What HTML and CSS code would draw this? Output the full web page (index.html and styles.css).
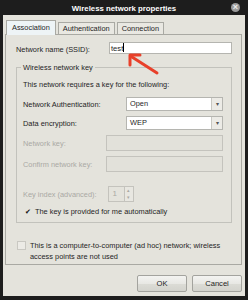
FILE: index.html
```html
<!DOCTYPE html>
<html lang="en">
<head>
    <meta charset="UTF-8">
    <title>Wireless network properties</title>
    <link rel="stylesheet" href="styles.css">
</head>
<body>
    <div class="window">
        <div class="titlebar">
            <span></span>
            <span class="title">Wireless network properties</span>
            <span class="close">&#215;</span>
        </div>

        <div class="client">
            <div class="tabs">
                <div class="tab active">Association</div>
                <div class="tab">Authentication</div>
                <div class="tab">Connection</div>
            </div>

            <div class="panel">
                <div class="row ssid-row">
                    <label>Network name (SSID):</label>
                    <div class="field ssid">test<span class="caret"></span>
                        <svg class="arrow" width="34" height="24" viewBox="0 0 34 24">
                            <path d="M31 21 L6 5" stroke="#e8402a" stroke-width="3" stroke-linecap="round" fill="none"/>
                            <path d="M4 13 L4 3 L14 3" stroke="#e8402a" stroke-width="3" stroke-linecap="round" stroke-linejoin="round" fill="none"/>
                        </svg>
                    </div>
                </div>

                <fieldset class="group">
                    <legend>Wireless network key</legend>
                    <p class="note">This network requires a key for the following:</p>

                    <div class="row">
                        <label>Network Authentication:</label>
                        <div class="select">Open<span class="drop">&#9662;</span></div>
                    </div>
                    <div class="row">
                        <label>Data encryption:</label>
                        <div class="select">WEP<span class="drop">&#9662;</span></div>
                    </div>

                    <div class="row off key-row">
                        <label>Network key:</label>
                        <div class="field disabled wide"></div>
                    </div>
                    <div class="row off key-row">
                        <label>Confirm network key:</label>
                        <div class="field disabled wide"></div>
                    </div>

                    <div class="row off index-row">
                        <label>Key index (advanced):</label>
                        <div class="spin">
                            <span class="spin-val">1</span>
                            <span class="spin-btns"><i>&#9652;</i><i>&#9662;</i></span>
                        </div>
                    </div>

                    <div class="check-row">
                        <span class="box checked">&#10004;</span>
                        <span>The key is provided for me automatically</span>
                    </div>
                </fieldset>

                <div class="check-row adhoc">
                    <span class="box"></span>
                    <span>This is a computer-to-computer (ad hoc) network; wireless access points are not used</span>
                </div>
            </div>

            <div class="buttons">
                <button class="btn">OK</button>
                <button class="btn">Cancel</button>
            </div>
        </div>
    </div>
</body>
</html>
```

FILE: styles.css
```css
body {
    margin: 0;
    font-family: 'Liberation Sans', Arial, sans-serif;
    font-size: 7.4px;
    color: #1e1e1e;
    background: #1b1b1b;
}

.window {
    width: 248px;
    height: 300px;
    box-sizing: border-box;
    padding: 0 3px 4px 3px;
    background: #1d1d1d;
    display: flex;
    flex-direction: column;
}

.titlebar {
    height: 15px;
    display: grid;
    grid-template-columns: 1fr auto 1fr;
    align-items: center;
    color: #fff;
}

.title {
    font-weight: bold;
    font-size: 7.8px;
    padding-top: 1px;
}

.close {
    justify-self: end;
    width: 9px;
    height: 9px;
    margin-right: 5px;
    border-radius: 50%;
    background: #9a9a9a;
    color: #eee;
    font-size: 9px;
    line-height: 9px;
    text-align: center;
    font-weight: bold;
}

.client {
    flex: 1;
    background: #e4e3dc;
    padding: 5px 3px 3px 2px;
    display: flex;
    flex-direction: column;
}

.tabs {
    display: flex;
    gap: 2px;
    padding-left: 1px;
    height: 14px;
    position: relative;
    z-index: 1;
}

.tab {
    border: 1px solid #a9a9a3;
    border-bottom: none;
    background: #e9e8e2;
    padding: 0 4px;
    margin-top: 2px;
    line-height: 12px;
}

.tab.active {
    background: #eef4f6;
    margin-top: 0;
    line-height: 14px;
    padding: 0 5px 0 5px;
    margin-bottom: -1px;
}

.panel {
    border: 1px solid #a9a9a3;
    height: 231px;
    box-sizing: border-box;
    padding: 7px 9px 0 10px;
}

.row {
    display: flex;
    align-items: center;
    justify-content: space-between;
}

.ssid-row label {
    padding-top: 2px;
}

.field {
    background: #fff;
    border: 1px solid #b5b5b0;
    height: 12px;
    box-sizing: border-box;
}

.ssid {
    width: 123px;
    position: relative;
    line-height: 11px;
    padding-left: 1px;
    font-size: 7.6px;
}

.caret {
    display: inline-block;
    width: 1px;
    height: 9px;
    background: #000;
    vertical-align: -1px;
}

.arrow {
    position: absolute;
    left: 16px;
    top: 9px;
}

.group {
    margin: 9px 0 0 0;
    border: 1px solid #c2c2bc;
    padding: 4px 8px 6px 6px;
    height: 160px;
    box-sizing: border-box;
}

.group legend {
    padding: 0 2px;
    margin-left: -2px;
}

.note {
    margin: 4px 0 8px 0;
}

.group .row {
    margin-bottom: 5px;
}

.select {
    width: 97px;
    height: 14px;
    box-sizing: border-box;
    background: #fff;
    border: 1px solid #b5b5b0;
    padding-left: 3px;
    line-height: 12px;
    position: relative;
    display: flex;
    justify-content: space-between;
}

.drop {
    width: 10px;
    background: #ecebe6;
    border-left: 1px solid #c8c8c2;
    color: #555;
    font-size: 6px;
    text-align: center;
    line-height: 12px;
}

.off {
    color: #aaa9a4;
}

.key-row {
    margin-top: 5px;
}

.disabled {
    background: #e2e1da;
    border-color: #c4c3bd;
    height: 16px;
}

.wide {
    width: 117px;
}

.index-row {
    justify-content: flex-start;
    gap: 11px;
    margin-top: 14px;
}

.spin {
    width: 26px;
    height: 16px;
    box-sizing: border-box;
    border: 1px solid #c4c3bd;
    display: flex;
    justify-content: space-between;
    font-size: 8px;
}

.spin-val {
    padding: 2px 0 0 4px;
}

.spin-btns {
    width: 8px;
    display: flex;
    flex-direction: column;
    border-left: 1px solid #c4c3bd;
}

.spin-btns i {
    flex: 1;
    font-style: normal;
    font-size: 5px;
    line-height: 7px;
    text-align: center;
    background: #e8e7e1;
}

.check-row {
    display: flex;
    align-items: flex-start;
    gap: 3px;
    margin-top: 2px;
}

.box {
    width: 7px;
    height: 7px;
    flex: none;
    font-size: 7px;
    line-height: 7px;
    color: #111;
    margin-top: 1px;
}

.box.checked {
    margin-left: 2px;
}

.adhoc {
    margin-top: 17px;
    padding-left: 1px;
    gap: 4px;
    line-height: 11px;
}

.adhoc .box {
    background: #ecebe6;
    border: 1px solid #c9c8c2;
    margin-top: 1px;
}

.buttons {
    display: flex;
    justify-content: flex-end;
    gap: 5px;
    margin-top: 10px;
}

.btn {
    width: 50px;
    height: 17px;
    font-family: inherit;
    font-size: 7.6px;
    color: #222;
    border: 1px solid #a3a39e;
    border-radius: 2px;
    background: linear-gradient(#f3f3f1 0%, #e8e8e4 50%, #dcdcd6 51%, #d3d3cd 100%);
    padding: 0;
}
```
